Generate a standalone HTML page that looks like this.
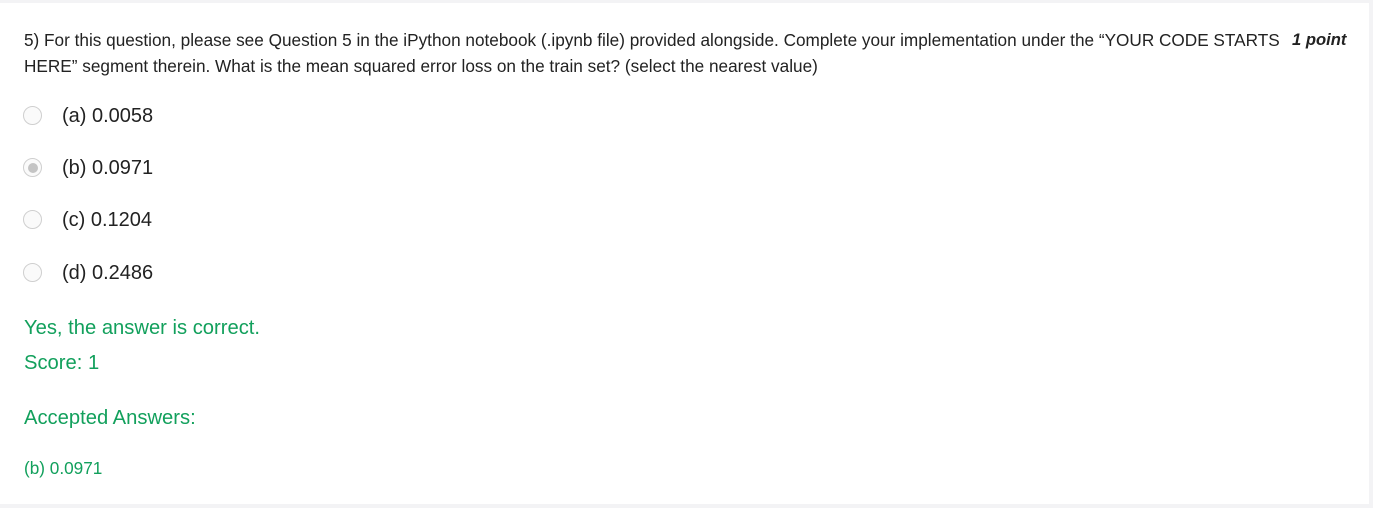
<!DOCTYPE html>
<html><head><style>
body{margin:0;background:#f3f3f5;width:1373px;height:508px;overflow:hidden;font-family:"Liberation Sans",sans-serif;}
.card{position:absolute;left:0;top:3px;width:1369px;height:501px;background:#fff;}
.t{position:absolute;white-space:nowrap;color:#222;}
.q{font-size:17.2px;left:24px;}
.pt{position:absolute;left:1292px;top:30px;font-size:16.6px;font-weight:bold;font-style:italic;color:#222;}
.r{position:absolute;left:23px;width:19px;height:19px;border-radius:50%;border:1px solid #cfcfcf;box-sizing:border-box;background:#fafafa;}
.r.s::after{content:"";position:absolute;left:3.5px;top:3.5px;width:10px;height:10px;border-radius:50%;background:#c4c4c4;}
.o{font-size:20px;left:62px;}
.g{color:#12a05c;left:24px;}
</style></head><body>
<div class="card"></div>
<div class="t q" style="top:30px">5) For this question, please see Question 5 in the iPython notebook (.ipynb file) provided alongside. Complete your implementation under the “YOUR CODE STARTS</div>
<div class="pt">1 point</div>
<div class="t q" style="top:56px">HERE” segment therein. What is the mean squared error loss on the train set? (select the nearest value)</div>
<div class="r" style="top:106px"></div><div class="t o" style="top:105px">(a) 0.0058</div>
<div class="r s" style="top:158px"></div><div class="t o" style="top:157px">(b) 0.0971</div>
<div class="r" style="top:210px"></div><div class="t o" style="top:209px">(c) 0.1204</div>
<div class="r" style="top:263px"></div><div class="t o" style="top:262px">(d) 0.2486</div>
<div class="t g" style="top:317px;font-size:20.2px">Yes, the answer is correct.</div>
<div class="t g" style="top:352px;font-size:20.2px">Score: 1</div>
<div class="t g" style="top:407px;font-size:20.2px">Accepted Answers:</div>
<div class="t g" style="top:458px;font-size:17.2px">(b) 0.0971</div>
</body></html>
